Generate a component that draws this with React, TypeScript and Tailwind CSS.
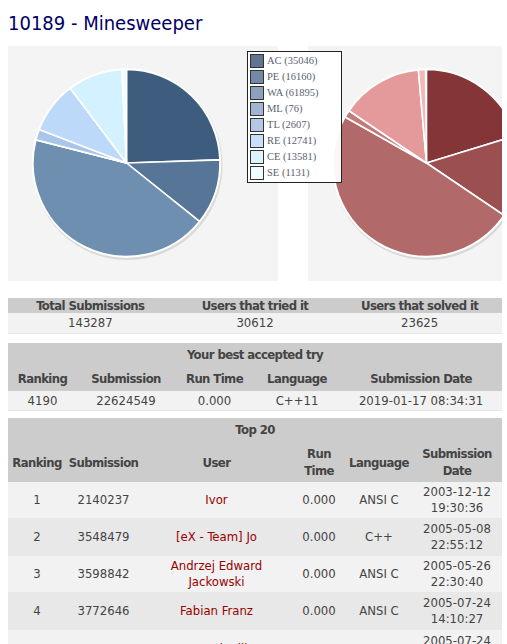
import React from "react";

type Slice = { a0: number; a1: number; color: string };

function pt(cx: number, cy: number, r: number, a: number) {
  const rad = (a * Math.PI) / 180;
  return [cx + r * Math.sin(rad), cy - r * Math.cos(rad)];
}

function arcPath(cx: number, cy: number, r: number, a0: number, a1: number) {
  const [x0, y0] = pt(cx, cy, r, a0);
  const [x1, y1] = pt(cx, cy, r, a1);
  const large = a1 - a0 > 180 ? 1 : 0;
  return `M${cx},${cy} L${x0.toFixed(2)},${y0.toFixed(2)} A${r},${r} 0 ${large} 1 ${x1.toFixed(2)},${y1.toFixed(2)} Z`;
}

function Pie({ slices }: { slices: Slice[] }) {
  const cx = 118.5;
  const cy = 117;
  const r = 93.5;
  return (
    <svg width="270" height="235" viewBox="0 0 270 235" className="block">
      <circle cx={cx + 1} cy={cy + 2} r={r + 1.5} fill="#d9d9d9" />
      <circle cx={cx} cy={cy} r={r + 1.2} fill="#ffffff" />
      {slices.map((s, i) => (
        <path
          key={i}
          d={arcPath(cx, cy, r, s.a0, s.a1)}
          fill={s.color}
          stroke="#ffffff"
          strokeWidth="1.6"
          strokeLinejoin="round"
        />
      ))}
    </svg>
  );
}

const data = [35046, 16160, 61895, 76, 2607, 12741, 13581, 1131];
const blueColors = ["#3e5c7e", "#577596", "#6f8fb0", "#8fb0d6", "#a9c6ea", "#bcd9fa", "#d4f1ff", "#ecfcff"];
const total = data.reduce((a, b) => a + b, 0);
const blueSlices: Slice[] = (() => {
  let acc = 0;
  return data.map((v, i) => {
    const a0 = (acc / total) * 360;
    acc += v;
    const a1 = (acc / total) * 360;
    return { a0, a1, color: blueColors[i] };
  });
})();

const redSlices: Slice[] = [
  { a0: 0, a1: 73, color: "#833538" },
  { a0: 73, a1: 124, color: "#9b4f50" },
  { a0: 124, a1: 299.5, color: "#b26969" },
  { a0: 299.5, a1: 304, color: "#c27b7b" },
  { a0: 304, a1: 355, color: "#e49a9a" },
  { a0: 355, a1: 359.4, color: "#f4b6b6" },
];

const legend = [
  { label: "AC (35046)", color: "#5f7591" },
  { label: "PE (16160)", color: "#7489a6" },
  { label: "WA (61895)", color: "#8ca0bb" },
  { label: "ML (76)", color: "#a1b5d0" },
  { label: "TL (2607)", color: "#b3c8e5" },
  { label: "RE (12741)", color: "#c8dffa" },
  { label: "CE (13581)", color: "#ddf3ff" },
  { label: "SE (1131)", color: "#effdff" },
];

const top = [
  { rank: "1", sub: "2140237", user: ["Ivor"], time: "0.000", lang: "ANSI C", date: ["2003-12-12", "19:30:36"], h: "h-[36px]", bg: "bg-[#f2f2f2]" },
  { rank: "2", sub: "3548479", user: ["[eX - Team] Jo"], time: "0.000", lang: "C++", date: ["2005-05-08", "22:55:12"], h: "h-[38px]", bg: "bg-[#e8e8e8]" },
  { rank: "3", sub: "3598842", user: ["Andrzej Edward", "Jackowski"], time: "0.000", lang: "ANSI C", date: ["2005-05-26", "22:30:40"], h: "h-[36px]", bg: "bg-[#f2f2f2]" },
  { rank: "4", sub: "3772646", user: ["Fabian Franz"], time: "0.000", lang: "ANSI C", date: ["2005-07-24", "14:10:27"], h: "h-[38px]", bg: "bg-[#e8e8e8]" },
  { rank: "5", sub: "3773043", user: ["Konrad Wilk"], time: "0.000", lang: "ANSI C", date: ["2005-07-24", "15:02:18"], h: "h-[38px]", bg: "bg-[#f2f2f2]" },
];

const th = "p-0 font-bold tracking-[-0.6px]";

export default function App() {
  return (
    <div className="w-[507px] h-[644px] overflow-hidden bg-white text-[13px] text-[#444444] font-['DejaVu_Sans_Condensed','DejaVu_Sans',sans-serif]">
      <div className="pl-2 pt-[11px]">
        <h2 className="text-[20px] leading-[24px] text-[#000066] font-normal">10189 - Minesweeper</h2>
        <div className="relative mt-[11px] w-[494px] overflow-hidden flex gap-[30px]">
          <div className="w-[270px] h-[235px] shrink-0 bg-[#f4f4f4]">
            <Pie slices={blueSlices} />
          </div>
          <div className="w-[270px] h-[235px] shrink-0 bg-[#f4f4f4]">
            <Pie slices={redSlices} />
          </div>
          <div className="absolute left-[239px] top-[5px] w-[95px] h-[132px] border border-[#222222] bg-white/95 pl-[2px] pt-[2px] flex flex-col gap-[2px] font-['Liberation_Serif',serif] text-[10.5px] text-[#5b6270]">
            {legend.map((l) => (
              <div key={l.label} className="flex items-center h-[14px] gap-[3px]">
                <span className="w-[14px] h-[14px] border border-[#333333] shrink-0" style={{ backgroundColor: l.color }} />
                <span className="leading-[14px] whitespace-nowrap">{l.label}</span>
              </div>
            ))}
          </div>
        </div>

        <table className="mt-[17px] w-[494px] table-fixed border-collapse text-center">
          <colgroup>
            <col className="w-1/3" />
            <col className="w-1/3" />
            <col className="w-1/3" />
          </colgroup>
          <thead>
            <tr className="h-[15px] bg-[#cccccc] leading-[15px]">
              <th className={th}>Total Submissions</th>
              <th className={th}>Users that tried it</th>
              <th className={th}>Users that solved it</th>
            </tr>
          </thead>
          <tbody>
            <tr className="h-[20px] bg-[#f2f2f2] border-b border-[#e6e6e6]">
              <td className="p-0">143287</td>
              <td className="p-0">30612</td>
              <td className="p-0">23625</td>
            </tr>
          </tbody>
        </table>

        <table className="mt-[9px] w-[494px] table-fixed border-collapse text-center">
          <colgroup>
            <col className="w-[69px]" />
            <col className="w-[98px]" />
            <col className="w-[79px]" />
            <col className="w-[86px]" />
            <col className="w-[162px]" />
          </colgroup>
          <thead className="bg-[#cccccc]">
            <tr className="h-[24px]">
              <th colSpan={5} className={th}>Your best accepted try</th>
            </tr>
            <tr className="h-[24px]">
              <th className={th}>Ranking</th>
              <th className={th}>Submission</th>
              <th className={th}>Run Time</th>
              <th className={th}>Language</th>
              <th className={th}>Submission Date</th>
            </tr>
          </thead>
          <tbody>
            <tr className="h-[20px] bg-[#f2f2f2] border-b border-[#e6e6e6]">
              <td className="p-0">4190</td>
              <td className="p-0">22624549</td>
              <td className="p-0">0.000</td>
              <td className="p-0">C++11</td>
              <td className="p-0">2019-01-17 08:34:31</td>
            </tr>
          </tbody>
        </table>

        <table className="mt-[7px] w-[494px] table-fixed border-collapse text-center">
          <colgroup>
            <col className="w-[58px]" />
            <col className="w-[75px]" />
            <col className="w-[151px]" />
            <col className="w-[54px]" />
            <col className="w-[66px]" />
            <col className="w-[90px]" />
          </colgroup>
          <thead className="bg-[#cccccc]">
            <tr className="h-[24px]">
              <th colSpan={6} className={th}>Top 20</th>
            </tr>
            <tr className="h-[40px] leading-[17px]">
              <th className={th}>Ranking</th>
              <th className={th}>Submission</th>
              <th className={th}>User</th>
              <th className={th}>Run<br />Time</th>
              <th className={th}>Language</th>
              <th className={th}>Submission<br />Date</th>
            </tr>
          </thead>
          <tbody className="leading-[16px]">
            {top.map((r) => (
              <tr key={r.rank} className={`${r.h} ${r.bg}`}>
                <td className="p-0">{r.rank}</td>
                <td className="p-0">{r.sub}</td>
                <td className="p-0 text-[#990000]">
                  {r.user.map((u, i) => (
                    <div key={i}>{u}</div>
                  ))}
                </td>
                <td className="p-0">{r.time}</td>
                <td className="p-0">{r.lang}</td>
                <td className="p-0">
                  <div>{r.date[0]}</div>
                  <div>{r.date[1]}</div>
                </td>
              </tr>
            ))}
          </tbody>
        </table>
      </div>
    </div>
  );
}
